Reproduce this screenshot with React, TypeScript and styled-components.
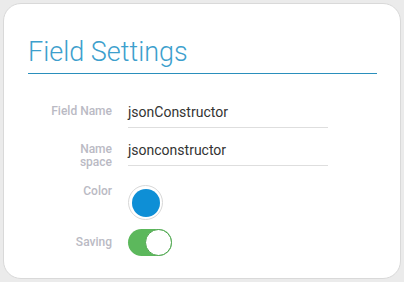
import React from "react";
import styled, { createGlobalStyle } from "styled-components";

const Global = createGlobalStyle`
  html, body { margin: 0; padding: 0; background: #ebebeb; }
  body { font-family: Roboto, "Liberation Sans", Arial, sans-serif; }
  * { box-sizing: border-box; }
`;

const Page = styled.div`
  padding: 3px;
  width: 404px;
  height: 282px;
`;

const Card = styled.div`
  width: 398px;
  height: 276px;
  background: #ffffff;
  border: 1px solid #d9d9d9;
  border-radius: 18px;
  padding: 32px 23px 0 24px;
`;

const Title = styled.h1`
  margin: 0;
  font-family: Roboto, "Liberation Sans", sans-serif;
  font-weight: 300;
  font-size: 27px;
  line-height: 33px;
  color: #3d9fcd;
  padding-bottom: 4px;
  border-bottom: 1px solid #2a8fbc;
`;

const Form = styled.div`
  display: flex;
  flex-direction: column;
  margin-top: 28px;
`;

const Row = styled.div<{ $mt?: number; $center?: boolean }>`
  display: grid;
  grid-template-columns: 84px 200px;
  column-gap: 16px;
  align-items: ${(p) => (p.$center ? "center" : "start")};
  margin-top: ${(p) => p.$mt ?? 0}px;
`;

const Label = styled.div<{ $pt?: number }>`
  text-align: right;
  font-size: 12px;
  font-weight: 500;
  line-height: 13px;
  color: #babac4;
  padding-top: ${(p) => p.$pt ?? 3}px;
`;

const Value = styled.div`
  font-size: 14px;
  line-height: 20px;
  color: #333333;
  padding-bottom: 5px;
  border-bottom: 1px solid #dedede;
`;

const Swatch = styled.div`
  width: 35px;
  height: 35px;
  border-radius: 50%;
  border: 1px solid #d8d8d8;
  display: flex;
  align-items: center;
  justify-content: center;
  margin-top: 3px;
`;

const SwatchFill = styled.div<{ $color: string }>`
  width: 28px;
  height: 28px;
  border-radius: 50%;
  background: ${(p) => p.$color};
`;

const Toggle = styled.div<{ $on: boolean }>`
  width: 44px;
  height: 27px;
  border-radius: 14px;
  background: ${(p) => (p.$on ? "#5cb85c" : "#dddddd")};
  display: flex;
  justify-content: ${(p) => (p.$on ? "flex-end" : "flex-start")};
  align-items: center;
`;

const Knob = styled.div`
  width: 27px;
  height: 27px;
  border-radius: 50%;
  background: #ffffff;
  border: 1px solid #4fa54f;
`;

export default function App() {
  return (
    <Page>
      <Global />
      <Card>
        <Title>Field Settings</Title>
        <Form>
          <Row>
            <Label>Field Name</Label>
            <Value>jsonConstructor</Value>
          </Row>
          <Row $mt={12}>
            <Label>
              Name
              <br />
              space
            </Label>
            <Value>jsonconstructor</Value>
          </Row>
          <Row $mt={13}>
            <Label>Color</Label>
            <Swatch>
              <SwatchFill $color="#0e8fd6" />
            </Swatch>
          </Row>
          <Row $mt={9} $center>
            <Label $pt={0}>Saving</Label>
            <Toggle $on>
              <Knob />
            </Toggle>
          </Row>
        </Form>
      </Card>
    </Page>
  );
}
